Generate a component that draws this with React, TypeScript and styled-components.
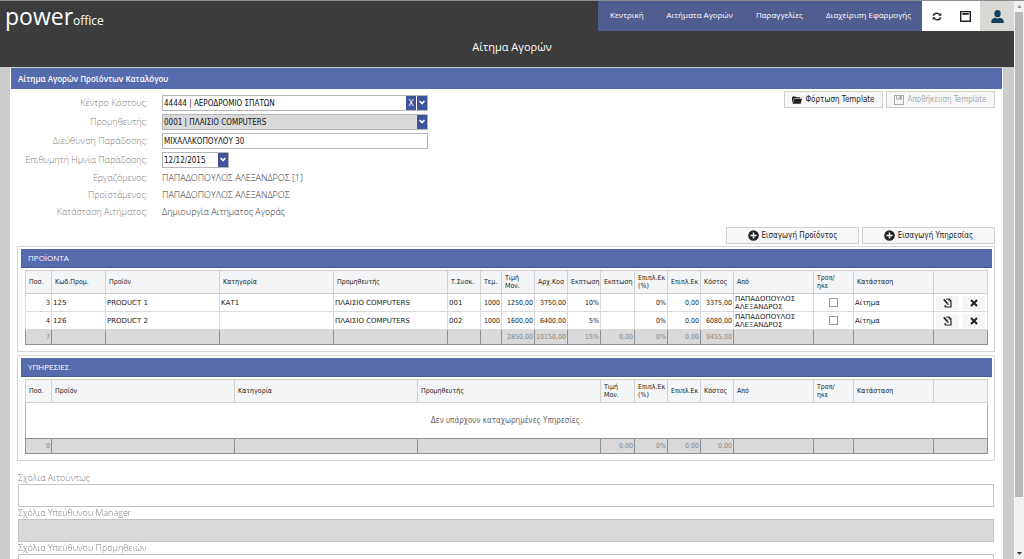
import React from "react";
import styled, { createGlobalStyle, css } from "styled-components";

const sans = `"Open Sans", "Noto Sans", sans-serif`;
const tahoma = `"DejaVu Sans Condensed", "DejaVu Sans", sans-serif`;
const verdana = `"DejaVu Sans", sans-serif`;

const GlobalStyle = createGlobalStyle`
  * { box-sizing: border-box; }
  body { margin: 0; background: #ccc; font-family: ${sans}; overflow: hidden; }
  button, input, textarea { font: inherit; margin: 0; }
`;

const Shell = styled.div`
  display: grid;
  grid-template-columns: minmax(0, 1fr) 10px;
  height: 100vh;
  border-top: 1px solid #8b8d90;
`;

const Page = styled.div`
  overflow: hidden;
`;

const Header = styled.header`
  background: #3c3c3c;
  color: #fff;
  height: 66px;
`;

const TopBar = styled.div`
  display: flex;
  justify-content: space-between;
  height: 30px;
`;

const Logo = styled.a`
  padding-left: 5px;
  color: #fff;
  text-decoration: none;
  font-size: 23px;
  font-weight: 500;
  line-height: 30px;
  white-space: nowrap;
  small { font-size: 12px; font-weight: 400; }
`;

const Nav = styled.nav`
  display: flex;
`;

const NavLinks = styled.div`
  display: flex;
  align-items: center;
  gap: 23px;
  padding: 0 11px 0 12px;
  background: #4f5d8f;
`;

const NavLink = styled.a`
  color: #fff;
  font-size: 8px;
  font-weight: 500;
  line-height: 28px;
  height: 30px;
  text-decoration: none;
  white-space: nowrap;
`;

const IconButton = styled.button<{ $user?: boolean }>`
  display: flex;
  align-items: center;
  justify-content: center;
  width: ${(p) => (p.$user ? 34 : 29)}px;
  padding: 0;
  border: 0;
  background: ${(p) => (p.$user ? "#d8d8d4" : "#fff")};
  color: ${(p) => (p.$user ? "#123f5e" : "#222")};
`;

const PageTitle = styled.h1`
  margin: 0;
  padding-left: 10px;
  font-size: 11px;
  line-height: 32px;
  font-weight: 400;
  text-align: center;
`;

const Panel = styled.main`
  margin: 1px 11px 0 10px;
  background: #fff;
`;

const PanelTitle = styled.h2`
  margin: 0;
  padding: 0 7px;
  border-left: 1px solid #fff;
  border-right: 1px solid #fff;
  background: #566bae;
  color: #fff;
  font-size: 8px;
  line-height: 21px;
  font-weight: 600;
`;

const FormArea = styled.div`
  display: flex;
  justify-content: space-between;
  align-items: flex-start;
  padding: 2px 8px 0 0;
`;

const Fields = styled.form`
  display: grid;
  grid-template-columns: 138px 266px;
  column-gap: 14px;
  padding-top: 2px;
  align-items: center;
  grid-template-rows: repeat(4, 19px) repeat(3, 17px);
`;

const Label = styled.label`
  color: #808080;
  font-size: 9px;
  line-height: 16px;
  font-weight: 300;
  text-align: right;
  white-space: nowrap;
`;

const Value = styled.output`
  color: #333;
  font-size: 9px;
  line-height: 16px;
  font-weight: 300;
  white-space: nowrap;
`;

const FieldBox = styled.div<{ $disabled?: boolean; $short?: boolean }>`
  display: flex;
  align-items: center;
  width: ${(p) => (p.$short ? "67px" : "100%")};
  height: 16px;
  border: 1px solid #b5b5b5;
  background: ${(p) => (p.$disabled ? "#d9d9d9" : "#fff")};
`;

const TextInput = styled.input`
  flex: 1;
  min-width: 0;
  height: 14px;
  padding: 1px 1px 0;
  border: 0;
  background: transparent;
  color: #111;
  font-family: ${tahoma};
  font-size: 8px;
  outline: 0;
`;

const Drop = styled.button`
  display: flex;
  align-items: center;
  justify-content: center;
  width: 10px;
  height: 14px;
  margin-left: 1px;
  padding: 0;
  border: 0;
  background: #3f559b;
  color: #fff;
  font-size: 9px;
  line-height: 12px;
`;

const ButtonRow = styled.div<{ $lower?: boolean }>`
  display: flex;
  justify-content: flex-end;
  gap: 3px;
  ${(p) => p.$lower && css`
    padding: 7px 8px 2px 0;
  `}
`;

const ToolButton = styled.button<{ $wide?: boolean }>`
  display: flex;
  align-items: center;
  justify-content: center;
  gap: 3px;
  width: ${(p) => (p.$wide ? 133 : 99)}px;
  height: 17px;
  padding: 0;
  border: 1px solid #cfcfcf;
  background: #f7f7f7;
  color: #222;
  font-family: ${tahoma};
  font-size: 8px;
  white-space: nowrap;
  &:disabled { width: 109px; color: #aaa; }
`;

const GridBox = styled.section`
  margin: 0 8px 3px 7px;
  padding: 2px 2px 6px 3px;
  border: 1px solid #d6d6d6;
`;

const GridTitle = styled.h3`
  margin: 0 0 2px;
  padding: 0 7px;
  background: #566bae;
  border-bottom: 1px solid #47598f;
  color: #fff;
  font-size: 8px;
  line-height: 18px;
  font-weight: 500;
`;

const Table = styled.table`
  width: calc(100% - 8px);
  margin: 0 4px;
  border-collapse: collapse;
  table-layout: fixed;
  border: 1px solid #b4b4b4;
  font-family: ${verdana};
  font-size: 7px;
  line-height: 8px;
  color: #222;
`;

const Th = styled.th`
  height: 23px;
  padding: 0 0 0 3px;
  border: 1px solid #cfd0d2;
  background: #f4f5f6;
  font-family: ${tahoma};
  font-weight: 400;
  text-align: left;
  white-space: pre;
`;

const Td = styled.td<{ $number?: boolean }>`
  height: 18px;
  padding: 0 1px;
  border: 1px solid #dadada;
  white-space: pre;
  ${(p) => p.$number && css`
    padding-left: 0;
    font-family: ${tahoma};
    text-align: right;
  `}
`;

const FootTd = styled(Td)`
  height: 15px;
  border-color: #8f8f8f;
  background: #d9d9d9;
  color: #858585;
`;

const EmptyTd = styled.td`
  height: 36px;
  padding: 0;
  color: #666;
  font-family: ${tahoma};
  font-size: 8px;
  text-align: center;
`;

const Check = styled.input`
  appearance: none;
  display: block;
  width: 9px;
  height: 9px;
  margin: 0 auto;
  border: 1px solid #999;
  background: #fff;
`;

const Actions = styled.div`
  display: flex;
  justify-content: center;
  gap: 3px;
`;

const ActionButton = styled.button`
  display: flex;
  align-items: center;
  justify-content: center;
  width: 23px;
  height: 14px;
  padding: 0;
  border: 0;
  background: #f6f6f6;
  color: #222;
`;

const Comments = styled.div`
  display: flex;
  flex-direction: column;
  padding: 8px 9px 0 8px;
`;

const CommentLabel = styled.label`
  color: #808080;
  font-size: 9px;
  line-height: 12px;
  font-weight: 300;
`;

const CommentBox = styled.textarea`
  display: block;
  width: 100%;
  height: 23px;
  border: 1px solid #c4c4c4;
  background: #fff;
  resize: none;
  &:disabled { background: #d9d9d9; }
`;

const ScrollTrack = styled.div`
  display: flex;
  flex-direction: column;
  align-items: center;
  background: #f1f1f1;
`;

const ScrollThumb = styled.div`
  width: 8px;
  height: 87%;
  background: #b9b9b9;
`;

const ScrollArrow = styled.div<{ $end?: boolean }>`
  display: flex;
  align-items: center;
  height: 11px;
  margin-top: ${(p) => (p.$end ? "auto" : "0")};
  color: ${(p) => (p.$end ? "#333" : "#999")};
`;

const Chevron = () => (
  <svg width="6" height="5" viewBox="0 0 6 5" fill="none" stroke="currentColor" strokeWidth="1.6">
    <path d="M.6 1 3 3.5 5.4 1" />
  </svg>
);

const RefreshIcon = () => (
  <svg width="10" height="9" viewBox="0 0 11 10" fill="none" stroke="currentColor" strokeWidth="1.6">
    <path d="M1.3 4.2C1.8 2.4 3.4 1.3 5.2 1.3c1.4 0 2.5.6 3.3 1.7M9.7 5.8C9.2 7.6 7.6 8.7 5.8 8.7 4.4 8.7 3.3 8.1 2.5 7" />
    <path d="M10.3.8v3.4H6.9zM.7 9.2V5.8h3.4z" fill="currentColor" stroke="none" />
  </svg>
);

const WindowIcon = () => (
  <svg width="11" height="11" viewBox="0 0 11 11">
    <path fill="currentColor" fillRule="evenodd" d="M0 0h11v11H0zM1.4 1.3v8.3h8.2V1.3zM2.2 2.1h6.6v1.7H2.2z" />
  </svg>
);

const UserIcon = () => (
  <svg width="13" height="13" viewBox="0 0 13 13" fill="currentColor">
    <ellipse cx="6.5" cy="3.7" rx="3.2" ry="3.6" />
    <path d="M.4 13V11c0-1.700 1.500-2.600 3.800-3.200 1.300 1 3.300 1 4.600 0 2.300.6 3.800 1.500 3.800 3.200v2z" />
  </svg>
);

const FolderIcon = () => (
  <svg width="10" height="8" viewBox="0 0 10 8" fill="currentColor">
    <path d="M0 7V1.200L.8.4h2.700l.8.9h3.900v1H2.200zM.6 7.800 2.300 2.800H10L8.700 7.800z" />
  </svg>
);

const SaveIcon = () => (
  <svg width="10" height="10" viewBox="0 0 10 10">
    <path fill="currentColor" fillRule="evenodd" d="M0 0h10v10H0zM1 1v8h8V1H8v3.500H2V1zM3 1v2.500h2.500V1z" />
  </svg>
);

const PlusIcon = () => (
  <svg width="11" height="11" viewBox="0 0 11 11">
    <circle cx="5.500" cy="5.500" r="5.300" fill="#222" />
    <path d="M5.500 2.500v6M2.500 5.500h6" stroke="#fff" strokeWidth="1.600" />
  </svg>
);

const EditIcon = () => (
  <svg width="9" height="10" viewBox="0 0 9 10" fill="none" stroke="currentColor">
    <path d="M3.200 1H6.200L8 3V9H2.200V7" strokeWidth="1.200" />
    <path d="M5.900 1V3.200H8" strokeWidth=".6" />
    <path d="M.8 1.200 4.300 5.400" strokeWidth="1.700" />
    <path d="M5.700 7.100 3.400 6.200 5.200 4.700z" fill="currentColor" stroke="none" />
  </svg>
);

const CrossIcon = () => (
  <svg width="8" height="8" viewBox="0 0 8 8" stroke="currentColor" strokeWidth="2">
    <path d="M1 1 7 7M7 1 1 7" />
  </svg>
);

type Col = { title: string; width?: number; number?: boolean };

const tail: Col[] = [
  { title: "Επιπλ.Εκ\n(%)", width: 33, number: true },
  { title: "Επιπλ.Εκ", width: 33, number: true },
  { title: "Κόστος", width: 33, number: true },
  { title: "Από", width: 80 },
  { title: "Τροπ/\nηκε", width: 40 },
  { title: "Κατάσταση", width: 80 },
  { title: "", width: 54 },
];

const productCols: Col[] = [
  { title: "Ποσ.", width: 26, number: true },
  { title: "Κωδ.Προμ.", width: 54 },
  { title: "Προϊόν" },
  { title: "Κατηγορία" },
  { title: "Προμηθευτής" },
  { title: "Τ.Συσκ.", width: 33 },
  { title: "Τεμ.", width: 21, number: true },
  { title: "Τιμή\nΜον.", width: 33, number: true },
  { title: "Αρχ.Κοσ", width: 33, number: true },
  { title: "Εκπτωση", width: 33, number: true },
  { title: "Εκπτωση", width: 34, number: true },
  ...tail,
];

const serviceCols: Col[] = [
  { title: "Ποσ.", width: 26, number: true },
  { title: "Προϊόν" },
  { title: "Κατηγορία" },
  { title: "Προμηθευτής" },
  { title: "Τιμή\nΜον.", width: 34, number: true },
  ...tail,
];

const person = "ΠΑΠΑΔΟΠΟΥΛΟΣ\nΑΛΕΞΑΝΔΡΟΣ";
const products = [
  ["3", "125", "PRODUCT 1", "ΚΑΤ1", "ΠΛΑΙΣΙΟ COMPUTERS", "001", "1000", "1250,00", "3750,00", "10%", "", "0%", "0,00", "3375,00", person],
  ["4", "126", "PRODUCT 2", "", "ΠΛΑΙΣΙΟ COMPUTERS", "002", "1000", "1600,00", "6400,00", "5%", "", "0%", "0,00", "6080,00", person],
];
const productTotals = ["7", "", "", "", "", "", "", "2850,00", "10150,00", "15%", "0,00", "0%", "0,00", "9455,00", "", "", "", ""];
const serviceTotals = ["0", "", "", "", "0,00", "0%", "0,00", "0,00", "", "", "", ""];

function DataGrid({ title, cols, totals, children }: { title: string; cols: Col[]; totals: string[]; children: React.ReactNode }) {
  return (
    <GridBox>
      <GridTitle>{title}</GridTitle>
      <Table>
        <colgroup>
          {cols.map((c, i) => <col key={i} width={c.width} />)}
        </colgroup>
        <thead>
          <tr>{cols.map((c, i) => <Th key={i}>{c.title}</Th>)}</tr>
        </thead>
        <tbody>{children}</tbody>
        <tfoot>
          <tr>{totals.map((t, i) => <FootTd key={i} $number={cols[i].number}>{t}</FootTd>)}</tr>
        </tfoot>
      </Table>
    </GridBox>
  );
}

export default function App() {
  return (
    <>
      <GlobalStyle />
      <Shell>
        <Page>
          <Header>
            <TopBar>
              <Logo href="#">power<small>office</small></Logo>
              <Nav>
                <NavLinks>
                  <NavLink href="#">Κεντρική</NavLink>
                  <NavLink href="#">Αιτήματα Αγορών</NavLink>
                  <NavLink href="#">Παραγγελίες</NavLink>
                  <NavLink href="#">Διαχείριση Εφαρμογής</NavLink>
                </NavLinks>
                <IconButton aria-label="Ανανέωση"><RefreshIcon /></IconButton>
                <IconButton aria-label="Παράθυρο"><WindowIcon /></IconButton>
                <IconButton $user aria-label="Χρήστης"><UserIcon /></IconButton>
              </Nav>
            </TopBar>
            <PageTitle>Αίτημα Αγορών</PageTitle>
          </Header>
          <Panel>
            <PanelTitle>Αίτημα Αγορών Προϊόντων Καταλόγου</PanelTitle>
            <FormArea>
              <Fields>
                <Label htmlFor="cost">Κέντρο Κόστους:</Label>
                <FieldBox>
                  <TextInput id="cost" defaultValue="44444 | ΑΕΡΟΔΡΟΜΙΟ ΣΠΑΤΩΝ" />
                  <Drop type="button" aria-label="Καθαρισμός">X</Drop>
                  <Drop type="button" aria-label="Επιλογή κέντρου"><Chevron /></Drop>
                </FieldBox>
                <Label htmlFor="supplier">Προμηθευτής:</Label>
                <FieldBox $disabled>
                  <TextInput id="supplier" readOnly defaultValue="0001 | ΠΛΑΙΣΙΟ COMPUTERS" />
                  <Drop type="button" aria-label="Επιλογή προμηθευτή"><Chevron /></Drop>
                </FieldBox>
                <Label htmlFor="address">Διεύθυνση Παράδοσης:</Label>
                <FieldBox>
                  <TextInput id="address" defaultValue="ΜΙΧΑΛΑΚΟΠΟΥΛΟΥ 30" />
                </FieldBox>
                <Label htmlFor="date">Επιθυμητή Ημνία Παράδοσης:</Label>
                <FieldBox $short>
                  <TextInput id="date" defaultValue="12/12/2015" />
                  <Drop type="button" aria-label="Επιλογή ημερομηνίας"><Chevron /></Drop>
                </FieldBox>
                <Label htmlFor="employee">Εργαζόμενος:</Label>
                <Value id="employee">ΠΑΠΑΔΟΠΟΥΛΟΣ ΑΛΕΞΑΝΔΡΟΣ [1]</Value>
                <Label htmlFor="manager">Προϊστάμενος:</Label>
                <Value id="manager">ΠΑΠΑΔΟΠΟΥΛΟΣ ΑΛΕΞΑΝΔΡΟΣ</Value>
                <Label htmlFor="status">Κατάσταση Αιτήματος:</Label>
                <Value id="status">Δημιουργία Αιτήματος Αγοράς</Value>
              </Fields>
              <ButtonRow>
                <ToolButton><FolderIcon />Φόρτωση Template</ToolButton>
                <ToolButton disabled><SaveIcon />Αποθήκευση Template</ToolButton>
              </ButtonRow>
            </FormArea>
            <ButtonRow $lower>
              <ToolButton $wide><PlusIcon />Εισαγωγή Προϊόντος</ToolButton>
              <ToolButton $wide><PlusIcon />Εισαγωγή Υπηρεσίας</ToolButton>
            </ButtonRow>
            <DataGrid title="ΠΡΟΪΟΝΤΑ" cols={productCols} totals={productTotals}>
              {products.map((row) => (
                <tr key={row[0]}>
                  {row.map((v, i) => <Td key={i} $number={productCols[i].number}>{v}</Td>)}
                  <Td><Check type="checkbox" aria-label="Τροποποιήθηκε" /></Td>
                  <Td>Αίτημα</Td>
                  <Td>
                    <Actions>
                      <ActionButton aria-label="Επεξεργασία"><EditIcon /></ActionButton>
                      <ActionButton aria-label="Διαγραφή"><CrossIcon /></ActionButton>
                    </Actions>
                  </Td>
                </tr>
              ))}
            </DataGrid>
            <DataGrid title="ΥΠΗΡΕΣΙΕΣ" cols={serviceCols} totals={serviceTotals}>
              <tr><EmptyTd colSpan={12}>Δεν υπάρχουν καταχωρημένες Υπηρεσίες.</EmptyTd></tr>
            </DataGrid>
            <Comments>
              <CommentLabel htmlFor="c1">Σχόλια Αιτούντως</CommentLabel>
              <CommentBox id="c1" />
              <CommentLabel htmlFor="c2">Σχόλια Υπεύθυνου Manager</CommentLabel>
              <CommentBox id="c2" disabled />
              <CommentLabel htmlFor="c3">Σχόλια Υπεύθυνου Προμηθειών</CommentLabel>
              <CommentBox id="c3" />
            </Comments>
          </Panel>
        </Page>
        <ScrollTrack>
          <ScrollArrow>
            <svg width="5" height="3" viewBox="0 0 5 3" fill="currentColor"><path d="M0 3 2.500 0 5 3z" /></svg>
          </ScrollArrow>
          <ScrollThumb />
          <ScrollArrow $end>
            <svg width="5" height="3" viewBox="0 0 5 3" fill="currentColor"><path d="M0 0h5L2.500 3z" /></svg>
          </ScrollArrow>
        </ScrollTrack>
      </Shell>
    </>
  );
}
